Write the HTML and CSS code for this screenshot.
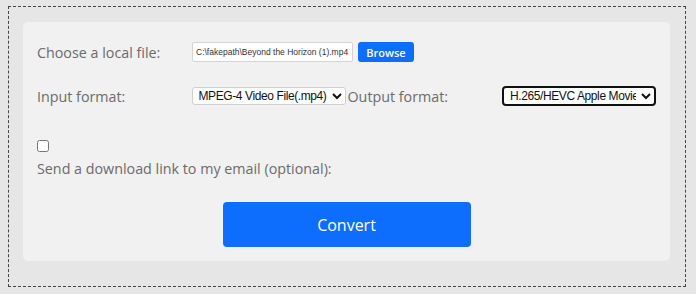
FILE: index.html
```html
<html lang="en">
  <head>
    <meta charset="UTF-8" />
    <meta name="viewport" content="width=device-width, initial-scale=1.0" />
    <title>Convert</title>
    <link rel="stylesheet" href="styles.css">
  </head>

  <body>
    <div class="frame">
      <form class="card" name="convert">
        <div class="row">
          <label class="caption" for="file">Choose a local file:</label>
          <input class="filename" type="text" id="file" readonly value="C:\fakepath\Beyond the Horizon (1).mp4" />
          <button type="button" class="browse">Browse</button>
        </div>
        <div class="row formats">
          <label class="caption" for="input-format">Input format:</label>
          <select id="input-format" class="format">
            <option>MPEG-4 Video File(.mp4)</option>
          </select>
          <label class="caption output" for="output-format">Output format:</label>
          <select id="output-format" class="format active">
            <option>H.265/HEVC Apple Movie File(.mov)</option>
          </select>
        </div>
        <div class="mail">
          <input type="checkbox" id="mail" />
          <label for="mail">Send a download link to my email (optional):</label>
        </div>
        <div class="submit">
          <button type="button" class="convert">Convert</button>
        </div>
      </form>
    </div>
  </body>
</html>
```

FILE: styles.css
```css
body {
  margin: 0;
  padding: 6px 10px 0 8px;
  background-color: #e6e6e6;
  font-family: "Open Sans", "Noto Sans", sans-serif;
  color: #6b6b6b;
}

.frame {
  border: 1px dashed #444;
  padding: 15px 15px 25px 14px;
  height: 239px;
}

.card {
  margin: 0;
  background-color: #f1f1f1;
  border-radius: 5px;
  padding: 20px 14px 14px;
}

.row {
  display: flex;
  align-items: center;
  height: 20px;
}

.formats {
  margin-top: 24px;
}

.caption {
  width: 155px;
  font-size: 14.3px;
}

.caption.output {
  margin-left: 2px;
}

.filename {
  box-sizing: border-box;
  width: 161px;
  height: 20px;
  padding: 0 3px;
  border: 1px solid #d4d4d4;
  border-radius: 2px;
  background: #fff;
  font-family: "Liberation Sans", Arial, sans-serif;
  font-size: 8.5px;
  color: #333;
}

.browse {
  margin-left: 5px;
  width: 56px;
  height: 20px;
  border: none;
  border-radius: 3px;
  background-color: #0d6efd;
  color: #fff;
  font-family: "Open Sans", sans-serif;
  font-weight: 600;
  font-size: 11px;
  padding: 0;
}

.format {
  box-sizing: border-box;
  width: 154px;
  height: 18px;
  border: 1px solid #cfcfcf;
  border-radius: 3px;
  background: #fff;
  font-family: "Liberation Sans", Arial, sans-serif;
  font-size: 12px;
  letter-spacing: -0.4px;
  color: #111;
  padding: 0 2px;
}

.format.active {
  height: 20px;
  border: 2px solid #111;
  border-radius: 4px;
}

.mail {
  margin-top: 34px;
  font-size: 14.3px;
}

.mail input {
  display: block;
  margin: 0 0 7px;
  width: 12px;
  height: 12px;
}

.submit {
  display: flex;
  justify-content: center;
  margin-top: 24px;
}

.convert {
  width: 248px;
  height: 45px;
  border: none;
  border-radius: 4px;
  background-color: #0d6efd;
  color: #fff;
  font-family: "Open Sans", sans-serif;
  font-size: 16px;
}
```
